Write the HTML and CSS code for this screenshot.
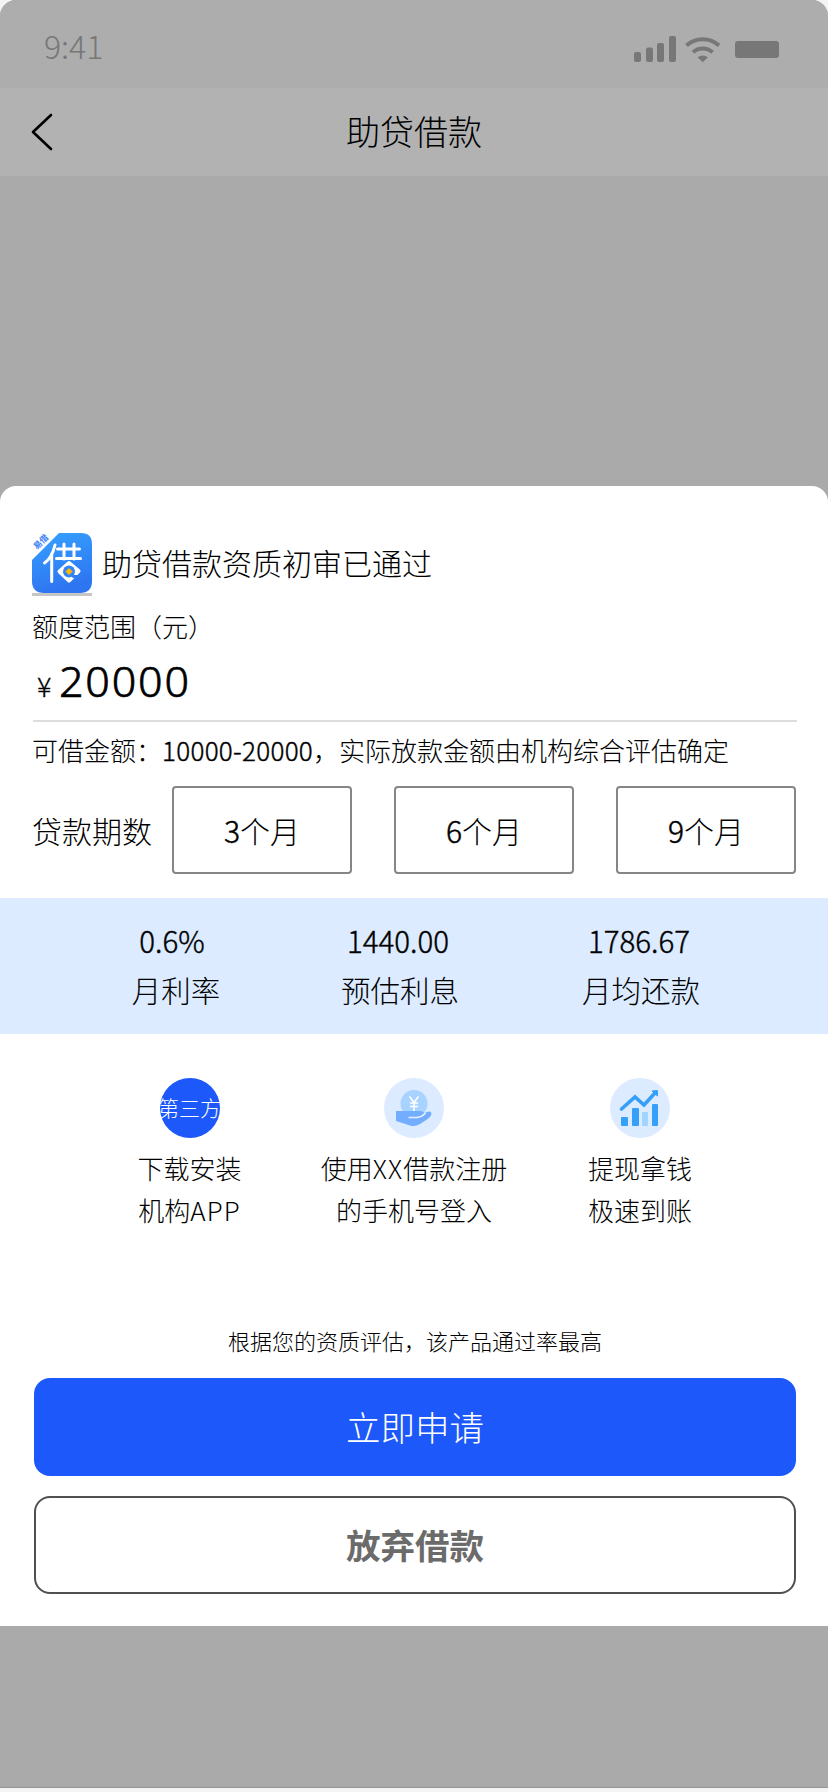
FILE: index.html
```html
<!DOCTYPE html>
<html lang="zh-CN">
<head>
<meta charset="utf-8">
<title>助贷借款</title>
<link rel="stylesheet" href="styles.css">
</head>
<body>
<div class="screen">
  <header class="status">
    <span class="clock">9:41</span>
    <svg class="signals" width="146" height="28" viewBox="0 0 146 28" fill="#777">
      <rect x="0" y="17" width="7" height="10" rx="2"/>
      <rect x="12" y="12.500" width="7" height="14.500" rx="2"/>
      <rect x="23" y="8" width="7" height="19" rx="2"/>
      <rect x="35" y="1" width="7" height="26" rx="2"/>
      <g fill="none" stroke="#777" stroke-width="4">
        <path d="M52.500 10.500C61.500 2 76 2 85 10.500"/>
        <path d="M59 17.300C64.500 12.200 73 12.200 78.500 17.300"/>
      </g>
      <path d="M63.500 22.300Q68.700 18.500 74 22.300L68.700 27.300Z"/>
      <rect x="101" y="6" width="44" height="17" rx="3"/>
    </svg>
  </header>
  <nav class="navbar">
    <svg class="back" width="24" height="40" viewBox="0 0 24 40" fill="none" stroke="#000" stroke-width="2.600" stroke-linecap="round" stroke-linejoin="round"><path d="M20 3L2 20L20 37"/></svg>
    <h1 class="title">助贷借款</h1>
  </nav>
  <main class="sheet">
    <section class="brand">
      <svg class="logo" width="60" height="64" viewBox="0 0 60 64">
        <defs><linearGradient id="logo-fill" x1="0" y1="0" x2="0.300" y2="1"><stop offset="0" stop-color="#36a2ff"/><stop offset="1" stop-color="#2e75f1"/></linearGradient></defs>
        <rect y="61" width="60" height="3" fill="#c6c6c6"/>
        <path d="M27 1H49Q60 1 60 12V49Q60 61 48 61H12Q0 61 0 49V28Z" fill="url(#logo-fill)"/>
        <text class="logo-tag" transform="translate(5 18) rotate(-45)">易借</text>
        <g fill="none" stroke="#fff" stroke-linecap="round" stroke-linejoin="round">
          <path d="M23 13Q20 26 12.500 31" stroke-width="3"/>
          <path d="M19.700 22V49.500" stroke-width="3"/>
          <path d="M25.500 17H47.500M24.500 26.500H48.500M32 12V27M42 12V27" stroke-width="3"/>
          <path d="M37 31L27.500 39.500L37 48.500L46.500 39L37 31" stroke-width="4" fill="#fff"/>
        </g>
        <path d="M38 43H51V46H41Z" fill="#2f7df4"/>
        <circle cx="37" cy="39.500" r="6" fill="#3384f6"/>
        <path d="M37 36.500L40 39.500L37 42.500L34 39.500Z" fill="#ffb900" stroke="#ffb900" stroke-linejoin="round"/>
      </svg>
      <h2 class="headline">助贷借款资质初审已通过</h2>
    </section>
    <p class="range-label">额度范围（元）</p>
    <p class="amount"><span class="yen">¥</span><span class="number">20000</span></p>
    <p class="limit">可借金额：<span class="limit-num">10000-20000</span>，实际放款金额由机构综合评估确定</p>
    <section class="terms">
      <span class="terms-label">贷款期数</span>
      <button class="term"><span class="digit">3</span>个月</button>
      <button class="term"><span class="digit">6</span>个月</button>
      <button class="term"><span class="digit">9</span>个月</button>
    </section>
    <section class="rates">
      <div class="rate rate-monthly"><span class="value">0.6%</span><span class="name">月利率</span></div>
      <div class="rate"><span class="value">1440.00</span><span class="name">预估利息</span></div>
      <div class="rate"><span class="value">1786.67</span><span class="name">月均还款</span></div>
    </section>
    <section class="steps">
      <div class="step"><span class="badge">第三方</span><p class="step-text">下载安装<br>机构<span class="latin">APP</span></p></div>
      <div class="step">
        <svg width="60" height="60" viewBox="0 0 60 60">
          <circle cx="30" cy="30" r="30" fill="#dcebff"/>
          <circle cx="30" cy="25.500" r="13.500" fill="#a8d2ff"/>
          <path d="M25.500 18.500L30 24.500L34.500 18.500M30 24.500V33M26 25H34M26 28.500H34" fill="none" stroke="#fff" stroke-width="1.600"/>
          <path d="M12 33H36Q39 33 40.500 35L43 34Q47.500 32.500 47.500 36Q47 38.500 43 41.500L36 46Q31 49 26 47.500L12 43Z" fill="#73adff"/>
          <path d="M24.500 39.500H32Q37.500 39.500 41.500 35" fill="none" stroke="#e4f0ff" stroke-width="1.700"/>
        </svg>
        <p class="step-text">使用<span class="latin">XX</span>借款注册<br>的手机号登入</p>
      </div>
      <div class="step">
        <svg width="60" height="60" viewBox="0 0 60 60">
          <circle cx="30" cy="30" r="30" fill="#dcebff"/>
          <g fill="#36a0f8"><rect x="11" y="39" width="7" height="9" rx="1"/><rect x="22" y="30" width="7" height="18" rx="1"/><rect x="42" y="26" width="6" height="22" rx="1"/><path d="M42 13L47.500 12.500V18Z" stroke="#36a0f8" stroke-linejoin="round"/></g>
          <rect x="32" y="34" width="6" height="14" rx="1" fill="#a0d5ff"/>
          <path d="M11.500 31L25 19L34 27L45 15" fill="none" stroke="#36a0f8" stroke-width="3.600" stroke-linecap="round"/>
        </svg>
        <p class="step-text">提现拿钱<br>极速到账</p>
      </div>
    </section>
    <footer class="actions">
      <p class="note">根据您的资质评估，该产品通过率最高</p>
      <button class="apply">立即申请</button>
      <button class="decline">放弃借款</button>
    </footer>
  </main>
</div>
</body>
</html>
```
FILE: styles.css
```css
* { box-sizing: border-box; }
body {
  margin: 0;
  background: #f5f4f5;
  color: #000;
  font-family: "Noto Sans CJK SC", sans-serif;
  font-weight: 300;
}
h1, h2, p { margin: 0; font-weight: 300; }
button { font-family: inherit; font-weight: 300; color: inherit; padding: 0; }
.screen {
  width: 828px;
  height: 1788px;
  background: #aaa;
  border-radius: 16px 16px 0 0;
  border-bottom: 1px solid #979297;
  overflow: hidden;
}
.status {
  height: 88px;
  background: #adadad;
  display: flex;
  justify-content: space-between;
  align-items: center;
  padding: 6px 48px 0 44px;
}
.clock { font-size: 32px; line-height: 40px; color: #777; padding-bottom: 5px; }
.signals { margin-top: 3px; }
.navbar {
  height: 88px;
  background: #b2b2b2;
  display: grid;
  grid-template-columns: 60px 1fr 60px;
  align-items: center;
}
.back { margin-left: 31px; }
.title { font-size: 34px; line-height: 46px; padding-bottom: 2px; text-align: center; }
.sheet {
  margin-top: 310px;
  height: 1140px;
  background: #fff;
  border-radius: 16px 16px 0 0;
  padding-top: 46px;
}
.brand { display: flex; gap: 10px; padding-left: 32px; height: 64px; }
.logo { overflow: visible; }
.logo-tag { font-size: 8.5px; font-weight: 700; fill: #3b82f6; }
.headline { font-size: 30px; line-height: 60px; }
.range-label { font-size: 26px; line-height: 40px; padding-left: 32px; margin-top: 10px; }
.amount {
  margin: 0 31px 0 33px;
  height: 76px;
  border-bottom: 2px solid #ddd;
  padding: 2px 0 0 4px;
  display: flex;
  align-items: baseline;
  line-height: 66px;
}
.yen { font-size: 27px; width: 22px; -webkit-text-stroke: 0.3px; }
.number {
  font-family: "Noto Sans", "Noto Sans CJK SC", sans-serif;
  font-size: 43px;
  letter-spacing: 1.8px;
  -webkit-text-stroke: 0.7px;
}
.limit { font-size: 26px; line-height: 40px; margin-top: 8px; padding-left: 32px; white-space: nowrap; }
.limit-num { -webkit-text-stroke: 0.4px; letter-spacing: 0.3px; }
.terms {
  display: grid;
  grid-template-columns: 98px repeat(3, 180px);
  column-gap: 42px;
  padding-left: 32px;
  margin-top: 16px;
  align-items: center;
}
.terms-label { font-size: 30px; line-height: 44px; white-space: nowrap; }
.term { height: 88px; border: 2px solid #868686; border-radius: 4px; background: #fff; font-size: 30px; }
.digit { -webkit-text-stroke: 0.5px; }
.rates {
  margin-top: 24px;
  height: 136px;
  background: #dcebff;
  display: grid;
  grid-template-columns: 240px 208px 274px;
  padding: 17px 0 0 56px;
}
.rate { display: flex; flex-direction: column; align-items: center; }
.value { font-size: 29.500px; line-height: 50px; -webkit-text-stroke: 0.4px; padding-right: 4px; }
.rate-monthly .value { padding-right: 8px; }
.name { font-size: 29.500px; line-height: 48px; }
.steps {
  display: grid;
  grid-template-columns: 225px 224px 228px;
  padding-left: 77px;
  margin-top: 44px;
}
.step { display: flex; flex-direction: column; align-items: center; gap: 9px; }
.badge {
  width: 60px;
  height: 60px;
  border-radius: 50%;
  background: #1c58fa;
  color: #fff;
  font-size: 21px;
  line-height: 58px;
  display: flex;
  justify-content: center;
  white-space: nowrap;
}
.step-text { font-size: 26px; line-height: 42px; text-align: center; white-space: nowrap; }
.latin { letter-spacing: 1.2px; }
.actions { display: flex; flex-direction: column; padding: 93px 32px 0 34px; }
.note { font-size: 22px; line-height: 32px; text-align: center; margin-bottom: 22px; }
.apply, .decline { height: 98px; border-radius: 16px; font-size: 34.500px; padding-bottom: 2px; }
.apply { background: #1c58fa; color: #fff; border: 0; }
.decline { margin-top: 20px; background: #fff; color: #6b6b6b; border: 2px solid #505050; font-weight: 700; }
```
